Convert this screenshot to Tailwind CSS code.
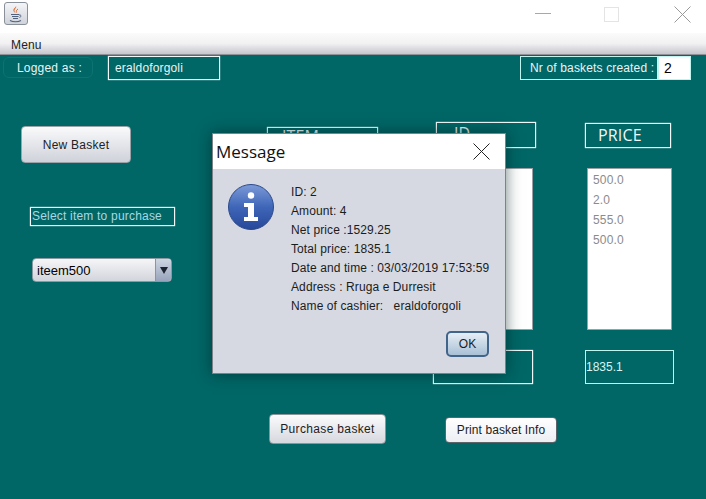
<!DOCTYPE html>
<html lang="en">

<head>
    <meta charset="UTF-8">
    <title>Basket</title>
    <script src="https://cdn.jsdelivr.net/npm/@tailwindcss/browser@4"></script>
</head>

<body class="w-[706px] h-[499px] overflow-hidden bg-[#006666] font-['Liberation_Sans',sans-serif] text-[12px] tracking-[0.15px]">
    <div class="relative w-full h-full flex flex-col">
        <!-- title bar -->
        <div class="h-[33px] bg-white flex items-start shrink-0">
            <div class="ml-[4px] mt-[2px] w-[24px] h-[23px] rounded-[3px] border border-[#8a9099] bg-gradient-to-b from-[#f4f5f7] to-[#cfd3da] flex items-center justify-center">
                <svg width="16" height="18" viewBox="0 0 16 18" fill="none">
                    <path d="M8 1c1 2-2 3-1.500 5 .2 1 1 1.500 1 2-1.500-1-2.500-2-2-3.500C6 3 8 2.500 8 1z" fill="#d9662a" />
                    <path d="M10 4c-1.500 1-2 2-1.500 3.500" stroke="#d9662a" stroke-width="1" />
                    <path d="M3 9.500h8M4 11.500h6.500M5 13.500h5M11 10c2-.5 3 1.500 .5 2.500" stroke="#50627c" stroke-width="1" />
                    <path d="M2 15.500c3 1.500 8 1.500 11 0" stroke="#50627c" stroke-width="1.200" />
                </svg>
            </div>
            <div class="ml-auto flex">
                <svg width="16" height="16" viewBox="0 0 16 16" class="mt-[6px] mr-[53px]"><path d="M0 7.500h16" stroke="#a8a8a8" /></svg>
                <svg width="16" height="16" viewBox="0 0 16 16" class="mt-[7px] mr-[54px]"><rect x=".5" y=".5" width="14" height="14" fill="none" stroke="#e4e4e4" /></svg>
                <svg width="17" height="17" viewBox="0 0 17 17" class="mt-[6px] mr-[15px]"><path d="M.5 .5l16 16M16.500 .5l-16 16" stroke="#9a9a9a" /></svg>
            </div>
        </div>

        <!-- menu bar -->
        <div class="h-[22px] shrink-0 pl-[11px] pt-[4px] leading-[16px] text-[#222] bg-gradient-to-b from-[#fbfbfb] via-[#f1f1f3] to-[#c6c7cd] border-b border-[#8f9298]">Menu</div>

        <!-- top row -->
        <div class="flex items-start h-[26px] mt-[1px] shrink-0">
            <div class="ml-[3px] mt-[1px] w-[90px] h-[21px] rounded-[6px] border border-[#0d7272] pl-[13px] leading-[20px] tracking-[0.2px] text-[#e8f4f4]">Logged as :</div>
            <div class="ml-[15px] w-[112px] h-[24px] border border-[#f0f8f8] shadow-[0_0_1px_#ffffff] pl-[6px] leading-[22px] text-[#e8f4f4]">eraldoforgoli</div>
            <div class="ml-[300px] w-[138px] h-[24px] border border-[#bff5ef] pl-[9px] leading-[23px] text-[#e8f4f4]">Nr of baskets created :</div>
            <div class="w-[33px] h-[24px] border border-[#bff5ef] bg-white pl-[5px] leading-[23px] text-[14px] text-black">2</div>
        </div>

        <!-- main columns -->
        <div class="flex items-start">
            <div class="ml-[21px] w-[246px] shrink-0">
                <div class="mt-[44px] w-[110px] h-[37px] rounded-[4px] border border-[#9aa3a8] bg-gradient-to-b from-[#fafafb] to-[#cfd2da] text-center leading-[36px] tracking-[0.25px] text-[#222]">New Basket</div>
                <div class="mt-[44px] ml-[9px] w-[145px] h-[19px] border border-[#f0f8f8] shadow-[0_0_1px_#ffffff] pl-[1px] leading-[17px] tracking-[0.2px] text-[#a8d8e4]">Select item to purchase</div>
                <div class="mt-[32px] ml-[11px] w-[140px] h-[24px] flex rounded-[4px] border border-[#8a9aa0] bg-gradient-to-b from-[#f6f6f8] to-[#d2d5dc] overflow-hidden">
                    <div class="flex-1 pl-[4px] leading-[23px] text-[13px] tracking-normal text-black">iteem500</div>
                    <div class="w-[16px] border-l border-[#8a94a8] bg-gradient-to-b from-[#cfd6e2] to-[#98a4bc] flex items-center justify-center">
                        <svg width="8" height="7" viewBox="0 0 8 7"><path d="M0 0h8L4 7z" fill="#1c2430" /></svg>
                    </div>
                </div>
            </div>

            <div class="w-[169px] shrink-0">
                <div class="mt-[45px] w-[111px] h-[30px] border border-[#f0f8f8] shadow-[0_0_1px_#ffffff] pl-[14px] leading-[17px] font-['Open_Sans',sans-serif] font-medium text-[16px] text-[#e8f4f4]">ITEM</div>
                <div class="mt-[257px] ml-[2px] w-[117px] h-[30px] rounded-[4px] border border-[#8d9498] bg-gradient-to-b from-[#fbfbfc] to-[#d6d8df] text-center leading-[29px] tracking-[0.35px] text-[#1c1c1c]">Purchase basket</div>
            </div>

            <div class="w-[149px] shrink-0">
                <div class="mt-[40px] w-[100px] h-[26px] border border-[#f0f8f8] shadow-[0_0_1px_#ffffff] pl-[17px] leading-[20px] font-['Open_Sans',sans-serif] font-medium text-[16px] text-[#e8f4f4]">ID</div>
                <div class="mt-[20px] w-[97px] h-[162px] bg-white border border-[#9aa0a6]"></div>
                <div class="mt-[20px] -ml-[3px] w-[100px] h-[34px] border border-[#f0f8f8] shadow-[0_0_1px_#ffffff]"></div>
                <div class="mt-[33px] ml-[9px] w-[112px] h-[26px] rounded-[4px] border border-[#5b6468] bg-gradient-to-b from-white to-[#eceef3] text-center leading-[24px] tracking-[0.1px] text-[#1c1c1c]">Print basket Info</div>
            </div>

            <div>
                <div class="mt-[41px] w-[86px] h-[25px] border border-[#f0f8f8] shadow-[0_0_1px_#ffffff] pl-[12px] leading-[22px] font-['Open_Sans',sans-serif] font-medium text-[16px] text-[#f0f8f8]">PRICE</div>
                <div class="mt-[20px] ml-[2px] w-[85px] h-[162px] bg-white border border-[#9aa0a6] pl-[5px] pt-[1px] leading-[20px] text-[#8b8b8b]">
                    <div>500.0</div>
                    <div>2.0</div>
                    <div>555.0</div>
                    <div>500.0</div>
                </div>
                <div class="mt-[20px] w-[89px] h-[34px] border border-[#bff5ef] leading-[33px] tracking-normal text-[#d8f4f0]">1835.1</div>
            </div>
        </div>

        <!-- dialog -->
        <div class="absolute left-[212px] top-[133px] w-[294px] h-[241px] flex flex-col bg-[#d6d9e2] border border-[#7c8288] shadow-[0_0_14px_rgba(0,30,30,0.55)]">
            <div class="h-[35px] bg-white flex items-center justify-between pl-[3px] pr-[15px] shrink-0 tracking-normal">
                <span class="font-['Open_Sans',sans-serif] text-[17px] text-[#111]">Message</span>
                <svg width="17" height="17" viewBox="0 0 17 17"><path d="M.5 .5l16 16M16.500 .5l-16 16" stroke="#222" /></svg>
            </div>
            <div class="flex flex-1">
                <svg width="46" height="46" viewBox="0 0 46 46" class="ml-[15px] mt-[15px] shrink-0">
                    <defs>
                        <linearGradient id="infoFill" x1="0" y1="0" x2="0" y2="1">
                            <stop offset="0" stop-color="#7c9ad8" />
                            <stop offset=".5" stop-color="#3f66b8" />
                            <stop offset="1" stop-color="#27479a" />
                        </linearGradient>
                    </defs>
                    <circle cx="23" cy="23" r="22.500" fill="url(#infoFill)" stroke="#2d4a8c" />
                    <circle cx="23" cy="11.500" r="3.200" fill="#fff" />
                    <path d="M16 19h10v14h4v4H16v-4h4V23h-4z" fill="#fff" />
                </svg>
                <div class="ml-[17px] mt-[14px] leading-[19px] tracking-[0.1px] text-[#1c1c1c]">
                    <div>ID: 2</div>
                    <div>Amount: 4</div>
                    <div>Net price :1529.25</div>
                    <div>Total price: 1835.1</div>
                    <div>Date and time : 03/03/2019 17:53:59</div>
                    <div>Address : Rruga e Durresit</div>
                    <div class="whitespace-pre">Name of cashier:   eraldoforgoli</div>
                </div>
            </div>
            <div class="absolute left-[233px] top-[197px] w-[43px] h-[26px] rounded-[5px] border-2 border-[#41648a] bg-gradient-to-b from-[#e6eef5] to-[#a9c0d6] text-center leading-[22px] text-[#1c1c1c]">OK</div>
        </div>
    </div>
</body>

</html>
